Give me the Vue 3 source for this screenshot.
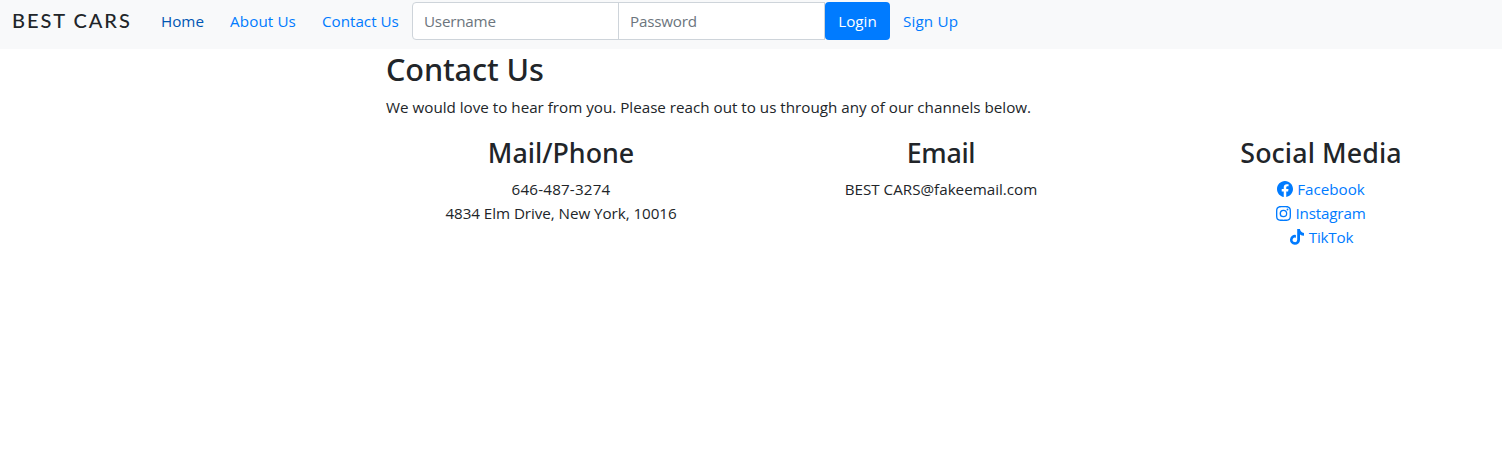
<script setup>
import { ref } from 'vue'

const username = ref('')
const password = ref('')
</script>

<template>
  <div class="page">
    <nav class="navbar">
      <a class="brand">BEST CARS</a>
      <a class="link home">Home</a>
      <a class="link about">About Us</a>
      <a class="link contact">Contact Us</a>
      <form class="login" @submit.prevent>
        <input v-model="username" class="field first" type="text" placeholder="Username" />
        <input v-model="password" class="field last" type="password" placeholder="Password" />
        <button class="submit" type="submit">Login</button>
      </form>
      <a class="link signup">Sign Up</a>
    </nav>

    <main class="container">
      <h2>Contact Us</h2>
      <p class="intro">We would love to hear from you. Please reach out to us through any of our channels below.</p>
      <div class="row">
        <section class="col">
          <h3>Mail/Phone</h3>
          <div class="phone">646-487-3274</div>
          <div class="address">4834 Elm Drive, New York, 10016</div>
        </section>
        <section class="col">
          <h3 class="email">Email</h3>
          <div>BEST CARS@fakeemail.com</div>
        </section>
        <section class="col">
          <h3 class="social">Social Media</h3>
          <a class="item">
            <svg viewBox="0 0 16 16"><path d="M16 8.049c0-4.446-3.582-8.05-8-8.05C3.58 0-.002 3.603-.002 8.05c0 4.017 2.926 7.347 6.75 7.951v-5.625h-2.03V8.05H6.75V6.275c0-2.017 1.195-3.131 3.022-3.131.876 0 1.791.157 1.791.157v1.98h-1.009c-.993 0-1.303.621-1.303 1.258v1.51h2.218l-.354 2.326H9.25V16c3.824-.604 6.75-3.934 6.75-7.951z" /></svg>
            <span>Facebook</span>
          </a>
          <a class="item instagram">
            <svg viewBox="0 0 16 16"><path d="M8 0C5.829 0 5.556.01 4.703.048 3.85.088 3.269.222 2.76.42a3.917 3.917 0 0 0-1.417.923A3.927 3.927 0 0 0 .42 2.76C.222 3.268.087 3.85.048 4.7.01 5.555 0 5.827 0 8.001c0 2.172.01 2.444.048 3.297.04.852.174 1.433.372 1.942.205.526.478.972.923 1.417.444.445.89.719 1.416.923.51.198 1.09.333 1.942.372C5.555 15.99 5.827 16 8 16s2.444-.01 3.298-.048c.851-.04 1.434-.174 1.943-.372a3.916 3.916 0 0 0 1.416-.923c.445-.445.718-.891.923-1.417.197-.509.332-1.09.372-1.942C15.99 10.445 16 10.173 16 8s-.01-2.445-.048-3.299c-.04-.851-.175-1.433-.372-1.941a3.926 3.926 0 0 0-.923-1.417A3.911 3.911 0 0 0 13.24.42c-.51-.198-1.092-.333-1.943-.372C10.443.01 10.172 0 7.998 0h.003zm-.717 1.442h.718c2.136 0 2.389.007 3.232.046.78.035 1.204.166 1.486.275.373.145.64.319.92.599.28.28.453.546.598.92.11.281.24.705.275 1.485.039.843.047 1.096.047 3.231s-.008 2.389-.047 3.232c-.035.78-.166 1.203-.275 1.485a2.47 2.47 0 0 1-.599.919c-.28.28-.546.453-.92.598-.28.11-.704.24-1.485.276-.843.038-1.096.047-3.232.047s-2.39-.009-3.233-.047c-.78-.036-1.203-.166-1.485-.276a2.478 2.478 0 0 1-.92-.598 2.48 2.48 0 0 1-.6-.92c-.109-.281-.24-.705-.275-1.485-.038-.843-.046-1.096-.046-3.233 0-2.136.008-2.388.046-3.231.036-.78.166-1.204.276-1.486.145-.373.319-.64.599-.92.28-.28.546-.453.92-.598.282-.11.705-.24 1.485-.276.738-.034 1.024-.044 2.515-.045v.002zm4.988 1.328a.96.96 0 1 0 0 1.92.96.96 0 0 0 0-1.92zm-4.27 1.122a4.109 4.109 0 1 0 0 8.217 4.109 4.109 0 0 0 0-8.217zm0 1.441a2.667 2.667 0 1 1 0 5.334 2.667 2.667 0 0 1 0-5.334z" /></svg>
            <span>Instagram</span>
          </a>
          <a class="item tiktok">
            <svg viewBox="0 0 16 16"><path d="M8.2 0h2.75c.1.95.45 1.8 1.1 2.5.75.8 1.75 1.3 2.95 1.4v2.75c-1.5 0-2.85-.4-4-1.2v5.45A5 5 0 1 1 6.9 5.95v2.8a2.3 2.3 0 1 0 1.3 2.1V0Z" /></svg>
            <span>TikTok</span>
          </a>
        </section>
      </div>
    </main>
  </div>
</template>

<style scoped>
.page {
  height: 454px;
  overflow: hidden;
  background: #fff;
  color: #212529;
  font: 15.2px/24px "Open Sans", "Noto Sans", sans-serif;
}
.navbar {
  display: flex;
  box-sizing: border-box;
  height: 49px;
  padding: 2px 0 9px 12px;
  align-items: center;
  background: #f8f9fa;
}
.brand {
  width: 136px;
  padding-bottom: 2px;
  font: 500 20px/28px Lato, sans-serif;
  letter-spacing: 1.95px;
  white-space: nowrap;
}
.link {
  box-sizing: border-box;
  padding-left: 13px;
  color: #007bff;
  white-space: nowrap;
}
.home { width: 69px; color: #0056b3; }
.about { width: 92px; letter-spacing: 0.12px; }
.contact { width: 103px; }
.signup { letter-spacing: 0.15px; }
.login { display: flex; }
.field {
  box-sizing: border-box;
  width: 207px;
  height: 38px;
  margin: 0;
  padding: 6px 11px;
  border: 1px solid #ced4da;
  background: #fff;
  color: #495057;
  font: inherit;
  letter-spacing: -0.2px;
  outline: none;
}
.field::placeholder { color: #6c757d; opacity: 1; }
.first { border-radius: 4px 0 0 4px; }
.last { margin-left: -1px; }
.submit {
  width: 65px;
  height: 38px;
  padding: 0;
  border: 0;
  border-radius: 4px;
  background: #007bff;
  color: #fff;
  font: inherit;
}
.container {
  box-sizing: border-box;
  width: 1140px;
  margin-left: 371px;
  padding: 0 15px;
}
h2, h3 { margin: 0 0 7px; padding-top: 1px; font-family: "Noto Sans", sans-serif; font-weight: 500; }
h2 { font-size: 30.6px; line-height: 38.4px; letter-spacing: -0.1px; }
h3 { font-size: 26.8px; line-height: 33.6px; }
.email { letter-spacing: -0.3px; }
.social { letter-spacing: 0.1px; }
.intro { margin: 0 0 16px; }
.row { display: flex; margin: 0 -15px; }
.col { width: 380px; text-align: center; }
.phone { letter-spacing: 0.18px; }
.address { letter-spacing: -0.05px; }
.item {
  display: flex;
  justify-content: center;
  align-items: center;
  gap: 4px;
  color: #007bff;
}
.item svg { width: 16px; height: 16px; fill: currentColor; }
.instagram { letter-spacing: -0.15px; }
.instagram svg { width: 15px; height: 15px; }
.tiktok { letter-spacing: -0.2px; }
</style>
